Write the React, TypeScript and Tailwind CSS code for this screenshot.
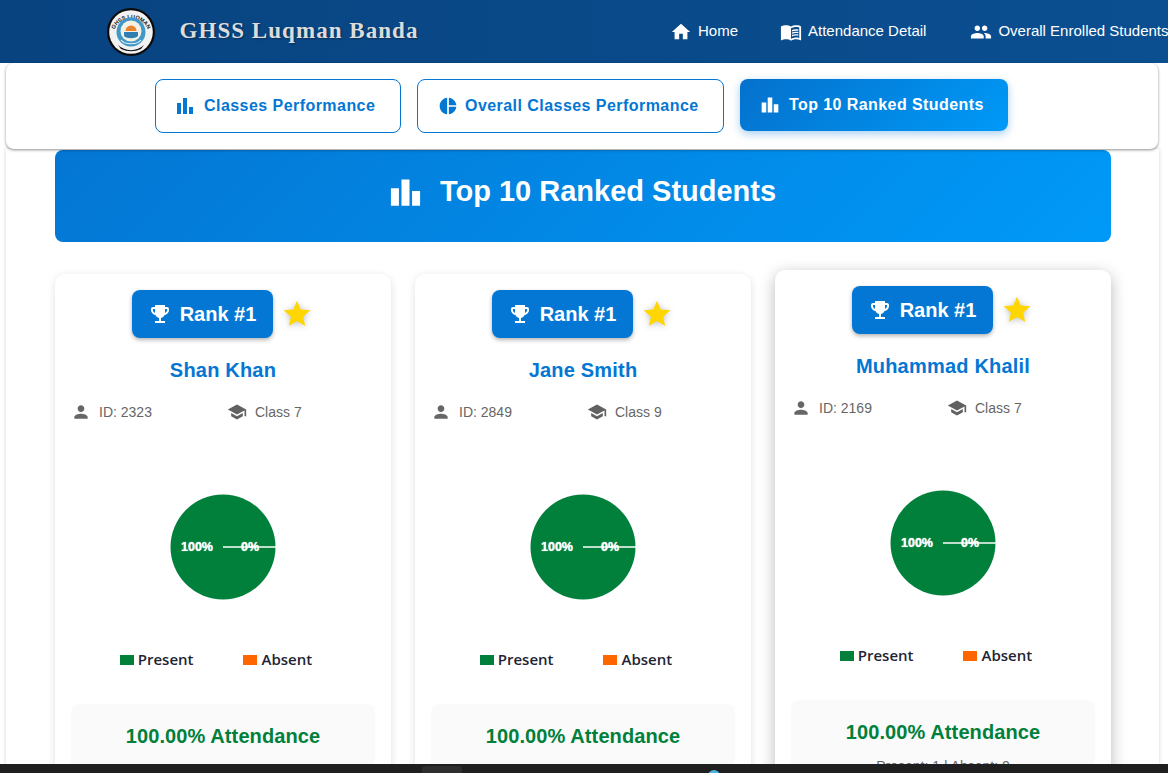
import {
  MdBarChart,
  MdEmojiEvents,
  MdHome,
  MdLeaderboard,
  MdMenuBook,
  MdPeople,
  MdPerson,
  MdPieChart,
  MdSchool,
  MdStar,
} from "react-icons/md";

const arial = "font-['Liberation_Sans',Arial,sans-serif]";

function Logo() {
  return (
    <svg viewBox="0 0 48 48" className="h-12 w-12 shrink-0" aria-hidden="true">
      <defs>
        <path id="logo-arc" d="M6 26 A18.2 18.2 0 0 1 42 26" />
      </defs>
      <circle cx="24" cy="24" r="24" fill="#0b0b0b" />
      <circle cx="24" cy="24" r="21.8" fill="#f2f2f2" />
      <text fontSize="5.6" fontWeight="700" fill="#222222" textAnchor="middle" fontFamily="Liberation Sans, sans-serif">
        <textPath href="#logo-arc" startOffset="50%">
          GHSS LUQMAN
        </textPath>
      </text>
      <path d="M11 37 A19 19 0 0 0 37 37 L34 41 A24 24 0 0 1 14 41 Z" fill="#111111" />
      <circle cx="24" cy="24" r="14.5" fill="#3f98c8" />
      <circle cx="24" cy="23" r="10.5" fill="#f4f0e4" />
      <path d="M18.5 23 A5.5 5.5 0 0 1 29.5 23 Z" fill="#e8842c" />
      <path d="M17 24 H31 V28 C28 31 20 31 17 28 Z" fill="#2f7fb3" />
      <path d="M14 32 C18 37 30 37 34 32" fill="none" stroke="#e8f1f6" strokeWidth="1.2" />
    </svg>
  );
}

function NavItem({ icon, label, className }: { icon: React.ReactNode; label: string; className: string }) {
  return (
    <a className={`flex shrink-0 items-center gap-[6px] whitespace-nowrap text-[15px] text-white ${className}`}>
      {icon}
      {label}
    </a>
  );
}

function Tab({ icon, label, width, pad }: { icon: React.ReactNode; label: string; width: string; pad: string }) {
  return (
    <button
      className={`flex h-[54px] items-center gap-[7px] rounded-[8px] border border-[#0476d3] bg-white text-[16px] font-bold tracking-[0.45px] text-[#0476d3] ${width} ${pad}`}
    >
      {icon}
      {label}
    </button>
  );
}

function Pie() {
  return (
    <svg viewBox="0 0 106 106" className="h-[106px] w-[106px]" aria-hidden="true">
      <circle cx="53" cy="53" r="52.5" fill="#00803a" />
      <line x1="53" y1="53" x2="106" y2="53" stroke="#ffffff" strokeWidth="1.5" />
    </svg>
  );
}

function Card({ name, id, cls, raised }: { name: string; id: string; cls: string; raised?: boolean }) {
  return (
    <div
      className={`flex h-[520px] flex-col rounded-[10px] bg-white px-4 pt-4 ${
        raised ? "-translate-y-1 shadow-[0_4px_16px_rgba(0,0,0,0.28)]" : "shadow-[0_2px_8px_rgba(0,0,0,0.12)]"
      }`}
    >
      <div className="flex items-center justify-center pr-[2px]">
        <div className="flex h-12 w-[141px] items-center justify-center gap-[8px] rounded-[8px] bg-[#0476d3] text-[20px] font-bold text-white shadow-[0_2px_4px_rgba(0,0,0,0.3)]">
          <MdEmojiEvents size={24} />
          Rank #1
        </div>
        <MdStar size={32} className="ml-[8px] text-[#ffd600] drop-shadow-[0_1px_3px_rgba(0,0,0,0.25)]" />
      </div>
      <div className="mt-[18px] text-center text-[20px] leading-[28px] font-bold tracking-[0.2px] text-[#0476d3]">
        {name}
      </div>
      <div className="mt-4 grid h-[24px] grid-cols-2 text-[14px] text-[#666666]">
        <div className="flex items-center gap-[8px]">
          <MdPerson size={20} />
          ID: {id}
        </div>
        <div className="flex items-center gap-[8px] pl-[4px]">
          <MdSchool size={20} className="text-[#616161]" />
          {cls}
        </div>
      </div>
      <div className="relative mt-[70px] flex justify-center">
        <Pie />
        <span className="absolute top-[45px] left-[110px] text-[12.5px] leading-[16px] font-bold text-white [text-shadow:0_0_1px_#ffffff]">
          100%
        </span>
        <span className="absolute top-[45px] left-[170px] text-[12.5px] leading-[16px] font-bold text-white [text-shadow:0_0_1px_#ffffff]">
          0%
        </span>
      </div>
      <div className="mt-[49px] mb-[1px] flex justify-center gap-[49px] pr-[14px] font-['Open_Sans',sans-serif] text-[15px] leading-[20px] font-semibold text-[#1f2433]">
        <div className="flex items-center gap-[4px]">
          <span className="mt-[2px] h-[10px] w-[14px] bg-[#00803a]" />
          Present
        </div>
        <div className="flex items-center gap-[5px]">
          <span className="mt-[2px] h-[10px] w-[14px] bg-[#ff6600]" />
          Absent
        </div>
      </div>
      <div className="mt-[34px] rounded-[8px] bg-[#fafafa] pt-[19px] text-center">
        <div className="text-[20px] leading-[26px] font-bold tracking-[0.1px] text-[#00803a]">100.00% Attendance</div>
        <div className="mt-[11px] text-[14px] text-[#666666]">Present: 1 | Absent: 0</div>
      </div>
    </div>
  );
}

export default function App() {
  return (
    <div className={`flex h-[773px] flex-col overflow-hidden bg-white ${arial}`}>
      <header className="flex h-[63px] shrink-0 items-center overflow-hidden bg-gradient-to-r from-[#084380] to-[#0b4f91] pl-[107px]">
        <Logo />
        <div className="ml-[24.5px] font-['Liberation_Serif',serif] text-[23px] font-bold tracking-[1.05px] text-[#dcdcdc] [text-shadow:1px_1px_2px_rgba(0,0,0,0.35)]">
          GHSS Luqman Banda
        </div>
        <nav className="ml-auto flex w-[498px] shrink-0 items-center">
          <NavItem icon={<MdHome size={22} />} label="Home" className="" />
          <NavItem icon={<MdMenuBook size={22} />} label="Attendance Detail" className="ml-[42px]" />
          <NavItem icon={<MdPeople size={22} />} label="Overall Enrolled Students" className="ml-[44px]" />
        </nav>
      </header>

      <div className="z-10 mr-[10px] ml-[6px] flex h-[86px] shrink-0 gap-4 rounded-[8px] bg-white pt-4 pl-[149px] shadow-[0_1px_3px_rgba(0,0,0,0.45)]">
        <Tab icon={<MdBarChart size={24} />} label="Classes Performance" width="w-[246px]" pad="pl-[17px]" />
        <Tab icon={<MdPieChart size={20} />} label="Overall Classes Performance" width="w-[307px]" pad="pl-[20px]" />
        <button className="flex h-[52px] w-[268px] items-center gap-[9px] rounded-[8px] bg-[linear-gradient(135deg,#0471cc,#0099f7)] pl-[20px] text-[16px] font-bold tracking-[0.42px] text-white shadow-[0_3px_8px_rgba(4,118,211,0.35)]">
          <MdLeaderboard size={20} />
          Top 10 Ranked Students
        </button>
      </div>

      <main className="mr-[9px] ml-[6px] flex min-h-0 flex-1 flex-col overflow-hidden pr-[48px] pl-[49px] shadow-[0_0_4px_rgba(0,0,0,0.18)]">
        <div className="mt-px flex h-[92px] shrink-0 items-center justify-center gap-[17px] rounded-[8px] bg-[linear-gradient(135deg,#0476d3,#0099f7)] pr-[2px] pb-2 text-[29px] font-bold text-white">
          <MdLeaderboard size={35} />
          Top 10 Ranked Students
        </div>
        <div className="mt-8 grid grid-cols-3 gap-6">
          <Card name="Shan Khan" id="2323" cls="Class 7" />
          <Card name="Jane Smith" id="2849" cls="Class 9" />
          <Card name="Muhammad Khalil" id="2169" cls="Class 7" raised />
        </div>
      </main>

      <footer className="z-10 flex h-[9px] shrink-0 items-start overflow-hidden bg-[#1f1f1f]">
        <span className="mt-[2px] ml-[422px] h-[10px] w-10 rounded-t-[3px] bg-[#2e2e2e]" />
        <span className="mt-[6px] ml-[246px] h-3 w-3 rounded-full bg-[#4cb4e8]" />
      </footer>
    </div>
  );
}
